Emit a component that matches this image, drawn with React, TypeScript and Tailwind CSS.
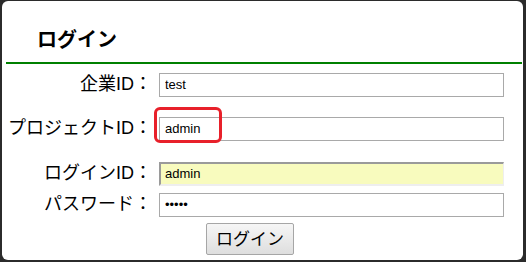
const labelFont = {
  fontFamily: '"Liberation Sans", "Noto Sans CJK JP", sans-serif',
};

const Row = ({
  label,
  children,
  className,
}: {
  label: string;
  children: React.ReactNode;
  className?: string;
}) => (
  <div className={"flex items-center h-[24px] " + (className ?? "")}>
    <div className="w-[150px] text-right text-[18px] text-black leading-none whitespace-nowrap">
      {label}
    </div>
    <div className="ml-[7px] w-[345px] h-full">{children}</div>
  </div>
);

const inputCls =
  "w-full h-full border border-[#a9a9a9] bg-white px-[5px] text-[13px] text-black outline-none";

export default function App() {
  return (
    <div
      className="w-[526px] h-[262px] bg-[#2b2b2b] pt-px pl-[2px] pr-[3px] pb-[2px]"
      style={labelFont}
    >
      <div className="relative h-full bg-white rounded-[6px] overflow-hidden">
        <h1 className="pt-[25px] pl-[35px] text-[20px] font-bold leading-[28px] text-black">
          ログイン
        </h1>
        <div className="mt-[8px] ml-[4px] mr-[1px] h-[2px] bg-[#008000]" />

        <Row label="企業ID：" className="mt-[8px]">
          <input className={inputCls} readOnly value="test" />
        </Row>
        <Row label="プロジェクトID：" className="mt-[20px]">
          <input className={inputCls} readOnly value="admin" />
        </Row>
        <Row label="ログインID：" className="mt-[21px]">
          <input
            className="w-full h-full border-t-2 border-l-2 border-r border-b-2 border-t-[#9a9a9a] border-l-[#9a9a9a] border-r-[#eeeeee] border-b-[#eeeeee] bg-[#f8fbbe] px-[4px] text-[13px] text-black outline-none"
            readOnly
            value="admin"
          />
        </Row>
        <Row label="パスワード：" className="mt-[7px]">
          <input className={inputCls} type="password" readOnly value="admin" />
        </Row>

        <div className="mt-[7px] ml-[204px]">
          <button className="w-[88px] h-[32px] border border-[#a6a6a6] rounded-[2px] bg-gradient-to-b from-[#f6f6f6] to-[#dedede] text-[17px] text-black leading-none">
            ログイン
          </button>
        </div>

        <div className="absolute left-[152px] top-[106px] w-[68px] h-[36px] border-[3px] border-[#e8202a] rounded-[6px] pointer-events-none" />
      </div>
    </div>
  );
}
